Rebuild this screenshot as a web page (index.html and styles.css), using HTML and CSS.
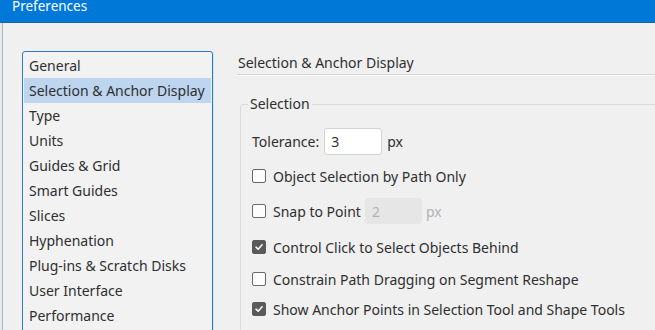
FILE: index.html
```html
<!DOCTYPE html>
<html lang="en">
<head>
    <meta charset="UTF-8">
    <meta name="viewport" content="width=device-width, initial-scale=1.0">
    <title>Preferences</title>
    <link rel="stylesheet" href="styles.css">
</head>
<body>
    <div class="titlebar">
        <span class="title">Preferences</span>
    </div>

    <div class="window">
        <ul class="category-list">
            <li>General</li>
            <li class="selected">Selection &amp; Anchor Display</li>
            <li>Type</li>
            <li>Units</li>
            <li>Guides &amp; Grid</li>
            <li>Smart Guides</li>
            <li>Slices</li>
            <li>Hyphenation</li>
            <li>Plug-ins &amp; Scratch Disks</li>
            <li>User Interface</li>
            <li>Performance</li>
        </ul>

        <div class="panel">
            <div class="panel-header">Selection &amp; Anchor Display</div>

            <fieldset class="group">
                <legend>Selection</legend>

                <div class="row row-tolerance">
                    <label for="tolerance">Tolerance:</label>
                    <input id="tolerance" class="num-input" type="text" value="3">
                    <span class="unit">px</span>
                </div>

                <label class="row check">
                    <span class="box"></span>
                    Object Selection by Path Only
                </label>

                <div class="row check">
                    <span class="box"></span>
                    Snap to Point
                    <input class="num-input disabled" type="text" value="2" disabled>
                    <span class="unit disabled-text">px</span>
                </div>

                <label class="row check row-loose">
                    <span class="box checked"></span>
                    Control Click to Select Objects Behind
                </label>

                <label class="row check row-tight">
                    <span class="box"></span>
                    Constrain Path Dragging on Segment Reshape
                </label>

                <label class="row check row-tighter">
                    <span class="box checked"></span>
                    Show Anchor Points in Selection Tool and Shape Tools
                </label>
            </fieldset>
        </div>
    </div>
</body>
</html>
```

FILE: styles.css
```css
html, body {
    margin: 0;
    height: 100%;
    overflow: hidden;
}

body {
    font-family: "Noto Sans", "Open Sans", sans-serif;
    font-size: 14px;
    color: #2f2f2f;
    background-color: #e9e9e9;
}

.titlebar {
    height: 22px;
    background-color: #0078d7;
    border-bottom: 1px solid #1b64a8;
    padding-left: 12px;
    overflow: hidden;
}

.title {
    display: block;
    color: white;
    font-size: 13.5px;
    line-height: 14px;
    margin-top: -1px;
}

.window {
    display: flex;
    align-items: flex-start;
    margin-left: 2px;
    height: 100%;
    border-left: 1px solid #a4b6c8;
    background-color: #f0f0f0;
}

.category-list {
    list-style: none;
    margin: 28px 0 0 19px;
    padding: 1px 1px 20px;
    width: 187px;
    border: 1px solid #2b79c9;
    border-radius: 3px;
    box-shadow: 1px 0 0 #cfe6f7;
    background-color: #f2f2f2;
}

.category-list li {
    height: 25px;
    line-height: 25px;
    padding-left: 5px;
    white-space: nowrap;
}

.category-list .selected {
    background-color: #bdd5ee;
}

.panel {
    flex: 1;
    margin-left: 24px;
    margin-top: 30px;
}

.panel-header {
    line-height: 20px;
    padding-left: 1px;
    padding-bottom: 1px;
    border-bottom: 1px solid #d7d7d7;
    box-shadow: 0 1px 0 #fafafa;
}

.group {
    margin: 19px 0 0 3px;
    padding: 0 0 40px 11px;
    border: 1px solid #dadada;
    border-right: none;
    border-radius: 4px 0 0 0;
}

.group legend {
    margin-left: -4px;
    padding: 0 2px;
    line-height: 20px;
}

.row {
    display: flex;
    align-items: center;
    height: 26px;
    margin-top: 9px;
    white-space: nowrap;
}

.row-tolerance {
    margin-top: 14px;
}

.row-loose {
    margin-top: 10px;
}

.row-tight {
    margin-top: 6px;
}

.row-tighter {
    margin-top: 4px;
}

.num-input {
    box-sizing: border-box;
    width: 58px;
    height: 27px;
    margin-left: 5px;
    padding: 0 6px;
    font: inherit;
    color: #2f2f2f;
    background-color: white;
    border: 1px solid #d3d3d3;
    border-radius: 3px;
    outline: none;
}

.num-input.disabled {
    width: 57px;
    height: 26px;
    margin-left: 4px;
    color: #b2b2b2;
    background-color: #e6e6e6;
    border-color: #e6e6e6;
}

.unit {
    margin-left: 5px;
}

.disabled-text {
    color: #b2b2b2;
    margin-left: 4px;
}

.box {
    box-sizing: border-box;
    width: 14px;
    height: 14px;
    margin-right: 7px;
    border: 1px solid #6a6a6a;
    border-radius: 2px;
    background-color: #fcfcfc;
    flex-shrink: 0;
}

.box.checked {
    border-color: #5a5a5a;
    background-color: #5a5a5a;
    background-image: url("data:image/svg+xml,%3Csvg xmlns='http://www.w3.org/2000/svg' viewBox='0 0 14 14'%3E%3Cpath d='M3.5 7.2 L6 9.6 L10.6 4.4' fill='none' stroke='white' stroke-width='1.8' stroke-linecap='round' stroke-linejoin='round'/%3E%3C/svg%3E");
    background-position: center;
    background-repeat: no-repeat;
}
```
